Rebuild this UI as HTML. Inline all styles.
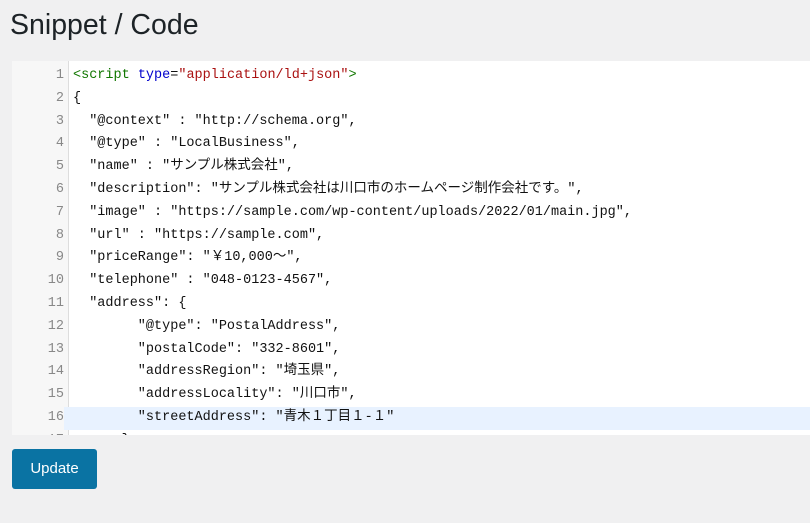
<!DOCTYPE html>
<html><head><meta charset="utf-8"><style>
body{margin:0;width:810px;height:523px;background:#f0f0f1;font-family:"Liberation Sans",sans-serif;overflow:hidden;position:relative}
h1{position:absolute;left:10px;top:8px;margin:0;font-weight:400;font-size:28.5px;color:#1d2327;line-height:34px}
.ed{position:absolute;left:12px;top:61px;width:798px;height:374px;background:#fff;overflow:hidden}
.gut{position:absolute;left:0;top:0;width:56px;height:100%;background:#f7f7f7;border-right:1px solid #ddd}
.lines{position:absolute;left:0;top:4px;width:100%;font-family:"Liberation Mono","Noto Sans CJK JP",monospace;font-size:13.5px}
.l{height:22.8px;line-height:22.8px;position:relative;white-space:pre;color:#111}
.l .n{position:absolute;left:0;width:52px;text-align:right;color:#888}
.l .c{position:absolute;left:61px}
.hl{background:#e8f2ff}
.hl .n{background:#f7f7f7}
.t{color:#170}.a{color:#00c}.s{color:#a11}
.btn{position:absolute;left:12px;top:449px;width:85px;height:40px;background:#0a73a3;border-radius:3px;color:#fff;font-size:15px;line-height:40px;text-align:center}
</style></head><body>
<h1>Snippet / Code</h1>
<div class="ed"><div class="gut"></div><div class="lines">
<div class="l"><span class="n">1</span><span class="c"><span class="t">&lt;script</span> <span class="a">type</span>=<span class="s">"application/ld+json"</span><span class="t">&gt;</span></span></div>
<div class="l"><span class="n">2</span><span class="c">{</span></div>
<div class="l"><span class="n">3</span><span class="c">  "@context" : "http://schema.org",</span></div>
<div class="l"><span class="n">4</span><span class="c">  "@type" : "LocalBusiness",</span></div>
<div class="l"><span class="n">5</span><span class="c">  "name" : "サンプル株式会社",</span></div>
<div class="l"><span class="n">6</span><span class="c">  "description": "サンプル株式会社は川口市のホームページ制作会社です。",</span></div>
<div class="l"><span class="n">7</span><span class="c">  "image" : "https://sample.com/wp-content/uploads/2022/01/main.jpg",</span></div>
<div class="l"><span class="n">8</span><span class="c">  "url" : "https://sample.com",</span></div>
<div class="l"><span class="n">9</span><span class="c">  "priceRange": "￥10,000～",</span></div>
<div class="l"><span class="n">10</span><span class="c">  "telephone" : "048-0123-4567",</span></div>
<div class="l"><span class="n">11</span><span class="c">  "address": {</span></div>
<div class="l"><span class="n">12</span><span class="c">        "@type": "PostalAddress",</span></div>
<div class="l"><span class="n">13</span><span class="c">        "postalCode": "332-8601",</span></div>
<div class="l"><span class="n">14</span><span class="c">        "addressRegion": "埼玉県",</span></div>
<div class="l"><span class="n">15</span><span class="c">        "addressLocality": "川口市",</span></div>
<div class="l hl"><span class="n">16</span><span class="c">        "streetAddress": "青木１丁目１-１"</span></div>
<div class="l"><span class="n">17</span><span class="c">      }</span></div>
</div></div>
<div class="btn">Update</div>
</body></html>
